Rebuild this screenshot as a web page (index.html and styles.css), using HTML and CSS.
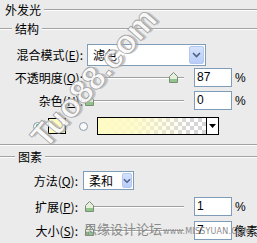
FILE: index.html
```html
<!DOCTYPE html>
<html>
<head>
<meta charset="utf-8">
<link rel="stylesheet" href="styles.css">
</head>
<body>
<div class="panel">
  <div class="legend top"><span class="ltext">外发光</span><span class="rule"></span></div>
  <div class="legend sub"><span class="lead"></span><span class="ltext">结构</span><span class="rule"></span></div>

  <div class="row r-blend">
    <label class="lab">混合模式(<u>E</u>):</label>
    <div class="select wide"><span class="val">滤色</span><span class="arrow"><svg width="9" height="6" viewBox="0 0 9 6"><path d="M1 1 L4.5 4.5 L8 1" fill="none" stroke="#4d6185" stroke-width="1.6"/></svg></span></div>
  </div>

  <div class="row r-op">
    <label class="lab">不透明度(<u>O</u>):</label>
    <div class="slider"><span class="track"></span><span class="thumb" style="left:82px"><svg width="9" height="11" viewBox="0 0 9 11"><path d="M0.5 10.5 V4.5 L4.5 0.5 L8.5 4.5 V10.5 Z" fill="#e4f0dc" stroke="#7c8c78"/><path d="M1 7 H8 V10 H1Z" fill="#8fc48a"/></svg></span></div>
    <div class="num">87</div><span class="unit">%</span>
  </div>

  <div class="row r-noise">
    <label class="lab">杂色(<u>N</u>):</label>
    <div class="slider"><span class="track"></span><span class="thumb" style="left:-2px"><svg width="9" height="11" viewBox="0 0 9 11"><path d="M0.5 10.5 V4.5 L4.5 0.5 L8.5 4.5 V10.5 Z" fill="#e4f0dc" stroke="#7c8c78"/><path d="M1 7 H8 V10 H1Z" fill="#8fc48a"/></svg></span></div>
    <div class="num">0</div><span class="unit">%</span>
  </div>

  <div class="row r-color">
    <span class="radio on"></span>
    <span class="swatch"></span>
    <span class="radio"></span>
    <div class="grad"><span class="gfill"></span><span class="garrow"><svg width="7" height="4" viewBox="0 0 7 4"><path d="M0 0 H7 L3.5 4Z" fill="#000"/></svg></span></div>
  </div>

  <div class="divider"></div>

  <div class="legend sub2"><span class="lead"></span><span class="ltext">图素</span><span class="rule"></span></div>

  <div class="row r-method">
    <label class="lab lab2">方法(<u>Q</u>):</label>
    <div class="select small"><span class="val">柔和</span><span class="arrow"><svg width="9" height="6" viewBox="0 0 9 6"><path d="M1 1 L4.5 4.5 L8 1" fill="none" stroke="#4d6185" stroke-width="1.6"/></svg></span></div>
  </div>

  <div class="row r-spread">
    <label class="lab lab2">扩展(<u>P</u>):</label>
    <div class="slider s2"><span class="track"></span><span class="thumb" style="left:0px"><svg width="9" height="11" viewBox="0 0 9 11"><path d="M0.5 10.5 V4.5 L4.5 0.5 L8.5 4.5 V10.5 Z" fill="#e4f0dc" stroke="#7c8c78"/><path d="M1 7 H8 V10 H1Z" fill="#8fc48a"/></svg></span></div>
    <div class="num">1</div><span class="unit">%</span>
  </div>

  <div class="row r-size">
    <label class="lab lab2">大小(<u>S</u>):</label>
    <div class="slider s2"><span class="track"></span><span class="thumb" style="left:0px"><svg width="9" height="11" viewBox="0 0 9 11"><path d="M0.5 10.5 V4.5 L4.5 0.5 L8.5 4.5 V10.5 Z" fill="#e4f0dc" stroke="#7c8c78"/><path d="M1 7 H8 V10 H1Z" fill="#8fc48a"/></svg></span></div>
    <div class="num">7</div><span class="unit">像素</span>
  </div>

  <svg class="wm-diag" width="257" height="243" viewBox="0 0 257 243">
    <g transform="rotate(-49 94 78)">
      <text x="96" y="91" text-anchor="middle" class="wm-shadow">Tuo88.com</text>
      <text x="94" y="89" text-anchor="middle" class="wm-face">Tuo88.com</text>
    </g>
  </svg>
  <div class="wm-bottom"><span class="cn">思缘设计论坛</span><span class="en">www.MISSYUAN.COM</span></div>
</div>
</body>
</html>
```

FILE: styles.css
```css
html, body {
  margin: 0;
  padding: 0;
  background: #ebebeb;
}
body {
  width: 257px;
  height: 243px;
  overflow: hidden;
  font-family: "Noto Sans CJK SC", "Liberation Sans", sans-serif;
  font-size: 12px;
  color: #000;
}
.panel {
  position: relative;
  width: 257px;
  height: 243px;
  overflow: hidden;
}
u { text-decoration: underline; }

.legend {
  display: flex;
  align-items: center;
  height: 18px;
}
.legend .ltext {
  padding: 0 3px;
  line-height: 14px;
  white-space: nowrap;
}
.legend .rule, .legend .lead {
  height: 0;
  border-top: 1px solid #a3a3a3;
  border-bottom: 1px solid #fdfdfd;
}
.legend .rule { flex: 1; }
.legend .lead { width: 12px; }
.top { margin-top: 1px; padding-left: 2px; }
.sub { margin-top: 1px; }

.row {
  display: flex;
  align-items: center;
}
.lab {
  width: 83px;
  text-align: right;
  white-space: nowrap;
  line-height: 14px;
  flex: none;
}
.lab2 { width: 78px; }

.r-blend { height: 23px; margin-top: 5px; }
.r-op { height: 19px; margin-top: 2px; }
.r-noise { height: 19px; margin-top: 4px; }
.r-color { height: 20px; margin-top: 6px; padding-left: 33px; }

.select {
  display: flex;
  align-items: center;
  background: #fff;
  border: 1px solid #7f9db9;
  box-sizing: border-box;
  height: 22px;
  padding: 1px;
}
.select.wide { width: 119px; margin-left: 4px; }
.select.small { width: 51px; height: 19px; margin-left: 5px; }
.select .val {
  flex: 1;
  padding-left: 4px;
  line-height: 14px;
  white-space: nowrap;
}
.select .arrow {
  width: 15px;
  height: 100%;
  box-sizing: border-box;
  background: linear-gradient(#d5e2fc, #b9cdf7);
  border: 1px solid #b5c8f0;
  border-radius: 2px;
  display: flex;
  align-items: center;
  justify-content: center;
}
.select.small .arrow { width: 10px; }

.slider {
  position: relative;
  width: 97px;
  height: 12px;
  margin-left: 4px;
  flex: none;
}
.slider.s2 { width: 99px; margin-left: 7px; }
.slider .track {
  position: absolute;
  left: 0;
  right: 0;
  top: 5px;
  border-top: 1px solid #a0a0a0;
  border-bottom: 1px solid #fff;
}
.slider .thumb {
  position: absolute;
  top: 0;
  width: 9px;
  height: 11px;
  display: block;
}
.slider .thumb svg { display: block; }

.num {
  width: 38px;
  height: 19px;
  box-sizing: border-box;
  margin-left: 10px;
  background: #fff;
  border: 1px solid #7f9db9;
  font-family: "Liberation Sans", Arial, sans-serif;
  font-size: 12px;
  line-height: 17px;
  padding-left: 2px;
  flex: none;
}
.unit {
  margin-left: 3px;
  font-family: "Liberation Sans", "Noto Sans CJK SC", sans-serif;
  font-size: 12px;
  white-space: nowrap;
}
.r-size .unit { font-family: "Noto Sans CJK SC", sans-serif; margin-left: 2px; }

.radio {
  width: 9px;
  height: 9px;
  box-sizing: border-box;
  border: 1px solid #8a9aaa;
  border-radius: 50%;
  background: #fafafa;
  position: relative;
  flex: none;
}
.radio.on::after {
  content: "";
  position: absolute;
  left: 1.5px;
  top: 1.5px;
  width: 4px;
  height: 4px;
  border-radius: 50%;
  background: #37a63a;
}
.swatch {
  width: 16px;
  height: 14px;
  margin-left: 6px;
  border: 1px solid #000;
  background: #fffbc4;
  flex: none;
}
.r-color .radio:nth-of-type(3) { margin-left: 13px; }
.grad {
  display: flex;
  width: 122px;
  height: 18px;
  box-sizing: border-box;
  border: 1px solid #000;
  margin-left: 9px;
  background: #fff;
}
.grad .gfill {
  flex: 1;
  background:
    linear-gradient(90deg, #fffbc4 0%, rgba(255,251,196,0.85) 35%, rgba(255,251,196,0) 85%),
    repeating-conic-gradient(#d6d6d6 0% 25%, #ffffff 0% 50%) 0 0 / 8px 8px;
}
.grad .garrow {
  width: 11px;
  border-left: 1px solid #000;
  background: #fff;
  display: flex;
  align-items: center;
  justify-content: center;
}

.divider {
  margin-top: 8px;
  height: 0;
  border-top: 1px solid #a3a3a3;
  border-bottom: 1px solid #fdfdfd;
}
.sub2 { margin-top: 2px; height: 18px; }
.sub2 .lead { width: 15px; }

.r-method { height: 19px; margin-top: 5px; }
.r-spread { height: 19px; margin-top: 7px; }
.r-size { height: 19px; margin-top: 5px; }

.wm-diag {
  position: absolute;
  left: 0;
  top: 0;
  pointer-events: none;
}
.wm-diag text {
  font-family: "Liberation Sans", sans-serif;
  font-weight: bold;
  font-size: 33px;
  letter-spacing: 0px;
}
.wm-shadow {
  fill: #a8a8a8;
  opacity: 0.6;
}
.wm-face {
  fill: #ffffff;
  fill-opacity: 0.9;
  stroke: #a0a0a0;
  stroke-width: 0.8;
}
.wm-bottom {
  position: absolute;
  left: 84px;
  top: 221px;
  display: flex;
  align-items: baseline;
  color: #8a8a8a;
  white-space: nowrap;
  pointer-events: none;
}
.wm-bottom .cn {
  font-family: "Noto Sans CJK SC", sans-serif;
  font-size: 13px;
  line-height: 16px;
}
.wm-bottom .en {
  font-family: "DejaVu Sans", sans-serif;
  font-size: 8px;
  margin-left: 1px;
  letter-spacing: 0.2px;
}
```
